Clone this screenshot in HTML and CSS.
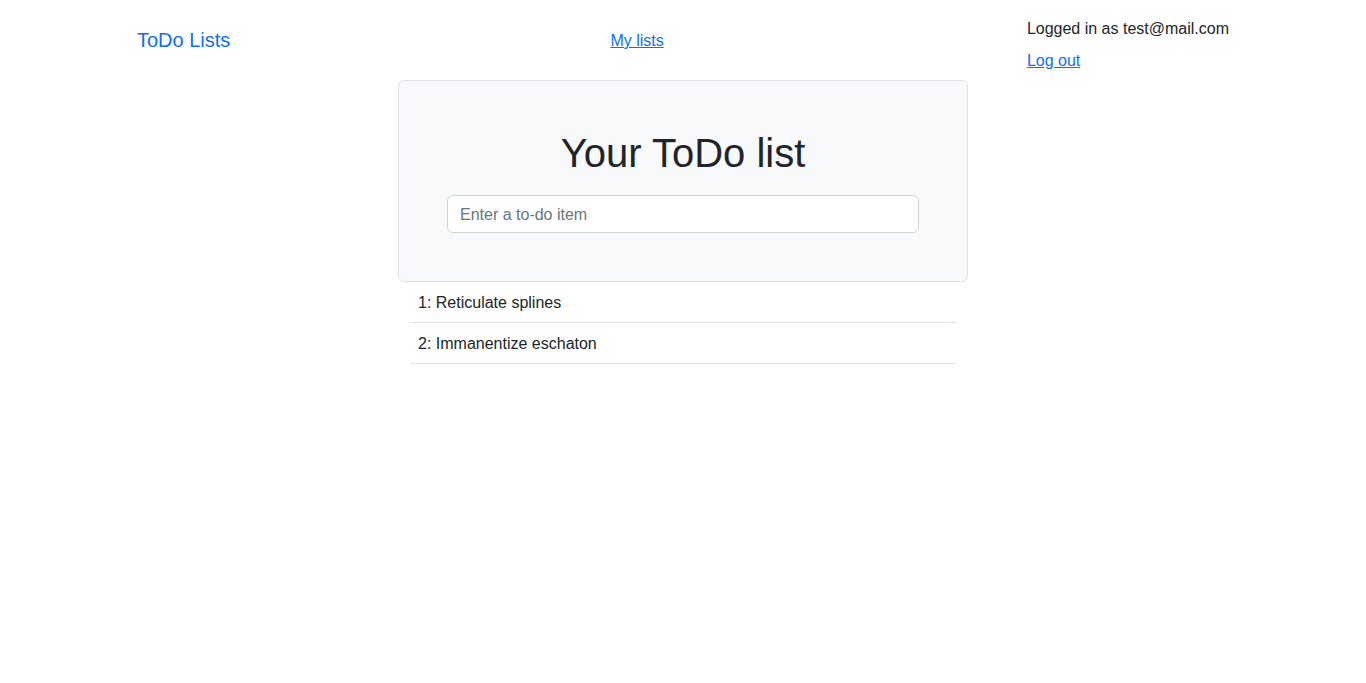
FILE: index.html
```html
<!DOCTYPE html>
<html lang="en">
<head>
<meta charset="utf-8">
<title>To-Do lists</title>
<link rel="stylesheet" href="styles.css">
</head>
<body>
<div class="container">
  <nav class="navbar">
    <a class="brand" href="#">ToDo Lists</a>
    <a class="nav-link" href="#">My lists</a>
    <div class="user">
      <span class="user-text">Logged in as test@mail.com</span>
      <a class="logout" href="#">Log out</a>
    </div>
  </nav>
  <div class="col">
    <div class="jumbo">
      <h1 class="title">Your ToDo list</h1>
      <form class="form">
        <input class="input" type="text" placeholder="Enter a to-do item">
      </form>
    </div>
  </div>
  <div class="col col-pad">
    <table class="table">
      <tr><td>1: Reticulate splines</td></tr>
      <tr><td>2: Immanentize eschaton</td></tr>
    </table>
  </div>
</div>
</body>
</html>
```

FILE: styles.css
```css
* { box-sizing: border-box; }
html, body { margin: 0; }
body {
  font-family: "Liberation Sans", Arial, sans-serif;
  font-size: 16px;
  line-height: 24px;
  color: #212529;
  background: #fff;
}
a { color: #0d6efd; }
.container {
  width: 1140px;
  margin: 0 auto;
  padding: 0 12px;
}
.navbar {
  display: flex;
  align-items: center;
  padding: 8px 12px;
}
.brand {
  font-size: 20px;
  line-height: 30px;
  text-decoration: none;
  color: #0d6efd;
}
.nav-link {
  margin-left: 380px;
  padding-top: 2px;
}
.user {
  margin-left: auto;
  display: flex;
  flex-direction: column;
  align-items: flex-start;
}
.user-text {
  padding: 9px 0 7px;
}
.logout {
  padding-top: 1px;
  margin-bottom: -1px;
}
.col {
  width: 570px;
  margin-left: 273px;
}
.col-pad { padding: 0 12px; }
.jumbo {
  background: #f8f9fa;
  border: 1px solid #dee2e6;
  border-radius: 6px;
  padding: 48px;
  text-align: center;
}
.title {
  margin: 0 0 18px;
  font-size: 40px;
  line-height: 48px;
  font-weight: 500;
}
.form { margin: 0; }
.input {
  display: block;
  width: 100%;
  height: 38px;
  padding: 7px 12px 5px;
  font-family: inherit;
  font-size: 16px;
  line-height: 24px;
  color: #212529;
  background: #fff;
  border: 1px solid #ced4da;
  border-radius: 6px;
}
.input::placeholder { color: #6c757d; opacity: 1; }
.table {
  width: 100%;
  border-collapse: collapse;
}
.table td {
  padding: 9px 8px 7px;
  border-bottom: 1px solid #dee2e6;
}
```
